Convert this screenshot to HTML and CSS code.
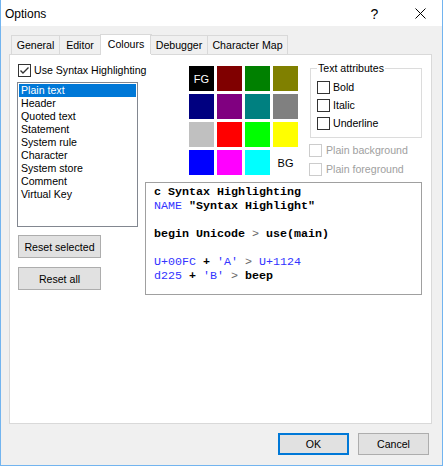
FILE: index.html
```html
<!DOCTYPE html>
<html>
<head>
<meta charset="utf-8">
<link rel="stylesheet" href="styles.css">
</head>
<body>
<div class="window">
  <div class="titlebar">
    <span class="title">Options</span>
    <span class="tb-btn help">?</span>
    <span class="tb-btn close"><svg width="11" height="11" viewBox="0 0 11 11"><path d="M0.5 0.5 L10.5 10.5 M10.5 0.5 L0.5 10.5" stroke="#000" stroke-width="1" fill="none"/></svg></span>
  </div>
  <div class="body">
    <div class="tabs">
      <div class="tab t-general">General</div>
      <div class="tab t-editor">Editor</div>
      <div class="tab t-colours active">Colours</div>
      <div class="tab t-debugger">Debugger</div>
      <div class="tab t-charmap">Character Map</div>
    </div>
    <div class="panel">
      <div class="col-left">
        <div class="check use-syntax"><span class="box"><svg width="11" height="11" viewBox="0 0 11 11"><polyline points="1.5,5.5 4,8 9.5,2.5" stroke="#333" stroke-width="1.4" fill="none"/></svg></span>Use Syntax Highlighting</div>
        <ul class="listbox">
          <li class="sel">Plain text</li>
          <li>Header</li>
          <li>Quoted text</li>
          <li>Statement</li>
          <li>System rule</li>
          <li>Character</li>
          <li>System store</li>
          <li>Comment</li>
          <li>Virtual Key</li>
        </ul>
        <div class="btn reset-sel">Reset selected</div>
        <div class="btn reset-all">Reset all</div>
      </div>
      <div class="col-right">
        <div class="top-row">
          <div class="swatches">
            <div class="sw c-black">FG</div>
            <div class="sw c-maroon"></div>
            <div class="sw c-green"></div>
            <div class="sw c-olive"></div>
            <div class="sw c-navy"></div>
            <div class="sw c-purple"></div>
            <div class="sw c-teal"></div>
            <div class="sw c-gray"></div>
            <div class="sw c-silver"></div>
            <div class="sw c-red"></div>
            <div class="sw c-lime"></div>
            <div class="sw c-yellow"></div>
            <div class="sw c-blue"></div>
            <div class="sw c-fuchsia"></div>
            <div class="sw c-aqua"></div>
            <div class="sw c-white">BG</div>
          </div>
          <div class="attrs">
            <div class="group">
              <div class="group-title">Text attributes</div>
              <div class="check g-check"><span class="box"></span>Bold</div>
              <div class="check g-check"><span class="box"></span>Italic</div>
              <div class="check g-check"><span class="box"></span>Underline</div>
            </div>
            <div class="check disabled"><span class="box"></span>Plain background</div>
            <div class="check disabled"><span class="box"></span>Plain foreground</div>
          </div>
        </div>
        <div class="code"><div class="ln">c Syntax Highlighting</div><div class="ln"><span class="blue">NAME</span> "Syntax Highlight"</div><div class="ln"> </div><div class="ln">begin Unicode <span class="op">&gt;</span> use(main)</div><div class="ln"> </div><div class="ln"><span class="blue">U+00FC</span> + <span class="blue">'A'</span> <span class="op">&gt;</span> <span class="blue">U+1124</span></div><div class="ln"><span class="blue">d225</span> + <span class="blue">'B'</span> <span class="op">&gt;</span> beep</div></div>
      </div>
    </div>
    <div class="buttons">
      <div class="btn push ok">OK</div>
      <div class="btn push">Cancel</div>
    </div>
  </div>
</div>
</body>
</html>
```

FILE: styles.css
```css
html, body {
  margin: 0;
  padding: 0;
  background: #fff;
}
body {
  font-family: "Liberation Sans", Arial, sans-serif;
  font-size: 10.6px;
  color: #000;
}
.window {
  width: 443px;
  height: 466px;
  box-sizing: border-box;
  border: 1px solid #72b4ef;
  border-top: none;
  background: #f0f0f0;
  display: flex;
  flex-direction: column;
}
.titlebar {
  height: 26px;
  flex: none;
  background: #fff;
  display: flex;
  align-items: center;
}
.title {
  flex: 1;
  font-size: 12px;
  margin-left: 4px;
  padding-top: 1px;
}
.tb-btn {
  width: 45px;
  height: 26px;
  display: flex;
  align-items: center;
  justify-content: center;
}
.help {
  font-size: 14px;
  padding-top: 1px;
  box-sizing: border-box;
}
.close svg {
  display: block;
  margin-left: 1px;
}
.body {
  flex: 1;
  padding: 8px 10px 10px 8px;
  display: flex;
  flex-direction: column;
}
.tabs {
  display: flex;
  align-items: flex-end;
  height: 20px;
  margin-left: 2px;
  position: relative;
  z-index: 1;
  flex: none;
}
.tab {
  height: 19px;
  box-sizing: border-box;
  border: 1px solid #d9d9d9;
  border-bottom: none;
  background: #f0f0f0;
  margin-right: -1px;
  display: flex;
  align-items: center;
  justify-content: center;
  line-height: 13px;
  padding-top: 1px;
}
.t-general { width: 49px; }
.t-editor { width: 42px; }
.t-colours { width: 52px; }
.t-debugger { width: 58px; }
.t-charmap { width: 81px; }
.tab.active {
  height: 21px;
  margin-bottom: -1px;
  margin-right: -2px;
  background: #fff;
  padding-top: 0;
  padding-bottom: 1px;
}
.panel {
  height: 370px;
  flex: none;
  box-sizing: border-box;
  border: 1px solid #d9d9d9;
  background: #fff;
  display: flex;
  gap: 7px;
  padding: 9px 9px 0 7px;
}
.col-left {
  width: 121px;
  display: flex;
  flex-direction: column;
  align-items: flex-start;
}
.check {
  display: flex;
  align-items: center;
  height: 13px;
  line-height: 13px;
  white-space: nowrap;
}
.box {
  width: 13px;
  height: 13px;
  box-sizing: border-box;
  border: 1px solid #333;
  background: #fff;
  margin-right: 3px;
  flex: none;
}
.box svg {
  display: block;
}
.use-syntax {
  margin-left: 1px;
}
.listbox {
  margin: 5px 0 0;
  padding: 1px;
  list-style: none;
  width: 121px;
  height: 145px;
  box-sizing: border-box;
  border: 1px solid #828790;
}
.listbox li {
  height: 13px;
  line-height: 13px;
  padding-left: 2px;
  white-space: nowrap;
}
.listbox li.sel {
  background: #0078d7;
  color: #fff;
}
.btn {
  box-sizing: border-box;
  border: 1px solid #adadad;
  background: #e1e1e1;
  display: flex;
  align-items: center;
  justify-content: center;
  white-space: nowrap;
}
.reset-sel {
  width: 83px;
  height: 23px;
  margin: 8px 0 0 1px;
}
.reset-all {
  width: 83px;
  height: 23px;
  margin: 9px 0 0 1px;
}
.col-right {
  width: 277px;
  display: flex;
  flex-direction: column;
}
.top-row {
  display: flex;
  height: 112px;
  flex: none;
}
.swatches {
  display: grid;
  grid-template-columns: repeat(4, 25px);
  grid-auto-rows: 25px;
  gap: 3px;
  margin: 2px 0 0 44px;
  align-self: flex-start;
}
.sw {
  display: flex;
  align-items: center;
  justify-content: center;
  font-size: 11px;
}
.c-black { background: #000; color: #fff; }
.c-maroon { background: #800000; }
.c-green { background: #008000; }
.c-olive { background: #808000; }
.c-navy { background: #000080; }
.c-purple { background: #800080; }
.c-teal { background: #008080; }
.c-gray { background: #808080; }
.c-silver { background: #c0c0c0; }
.c-red { background: #ff0000; }
.c-lime { background: #00ff00; }
.c-yellow { background: #ffff00; }
.c-blue { background: #0000ff; }
.c-fuchsia { background: #ff00ff; }
.c-aqua { background: #00ffff; }
.c-white { background: #fff; color: #000; }
.attrs {
  margin-left: 12px;
  width: 112px;
  display: flex;
  flex-direction: column;
}
.group {
  margin-top: 4px;
  height: 70px;
  box-sizing: border-box;
  border: 1px solid #dcdcdc;
  padding: 0 6px 7px;
}
.group-title {
  margin-top: -7px;
  width: fit-content;
  padding: 0 1px;
  background: #fff;
  line-height: 13px;
  height: 13px;
}
.g-check {
  margin-top: 5px;
}
.group-title + .g-check {
  margin-top: 6px;
}
.disabled {
  margin-top: 6px;
  margin-left: -1px;
  color: #a0a0a0;
}
.disabled .box {
  border-color: #cccccc;
  margin-right: 4px;
}
.code {
  margin-top: 6px;
  height: 113px;
  box-sizing: border-box;
  border: 1px solid #a0a0a0;
  padding: 2px 8px;
  font-family: "Liberation Mono", "Courier New", monospace;
  font-size: 11.67px;
  font-weight: bold;
  color: #000;
}
.ln {
  height: 14px;
  line-height: 14px;
  white-space: pre;
}
.code .blue {
  color: #3333ff;
  font-weight: normal;
}
.code .op {
  color: #666;
  font-weight: normal;
}
.buttons {
  display: flex;
  justify-content: flex-end;
  gap: 9px;
  margin: 9px 3px 0 0;
  flex: none;
}
.push {
  width: 71px;
  height: 22px;
}
.ok {
  border: 2px solid #0078d7;
}
```
